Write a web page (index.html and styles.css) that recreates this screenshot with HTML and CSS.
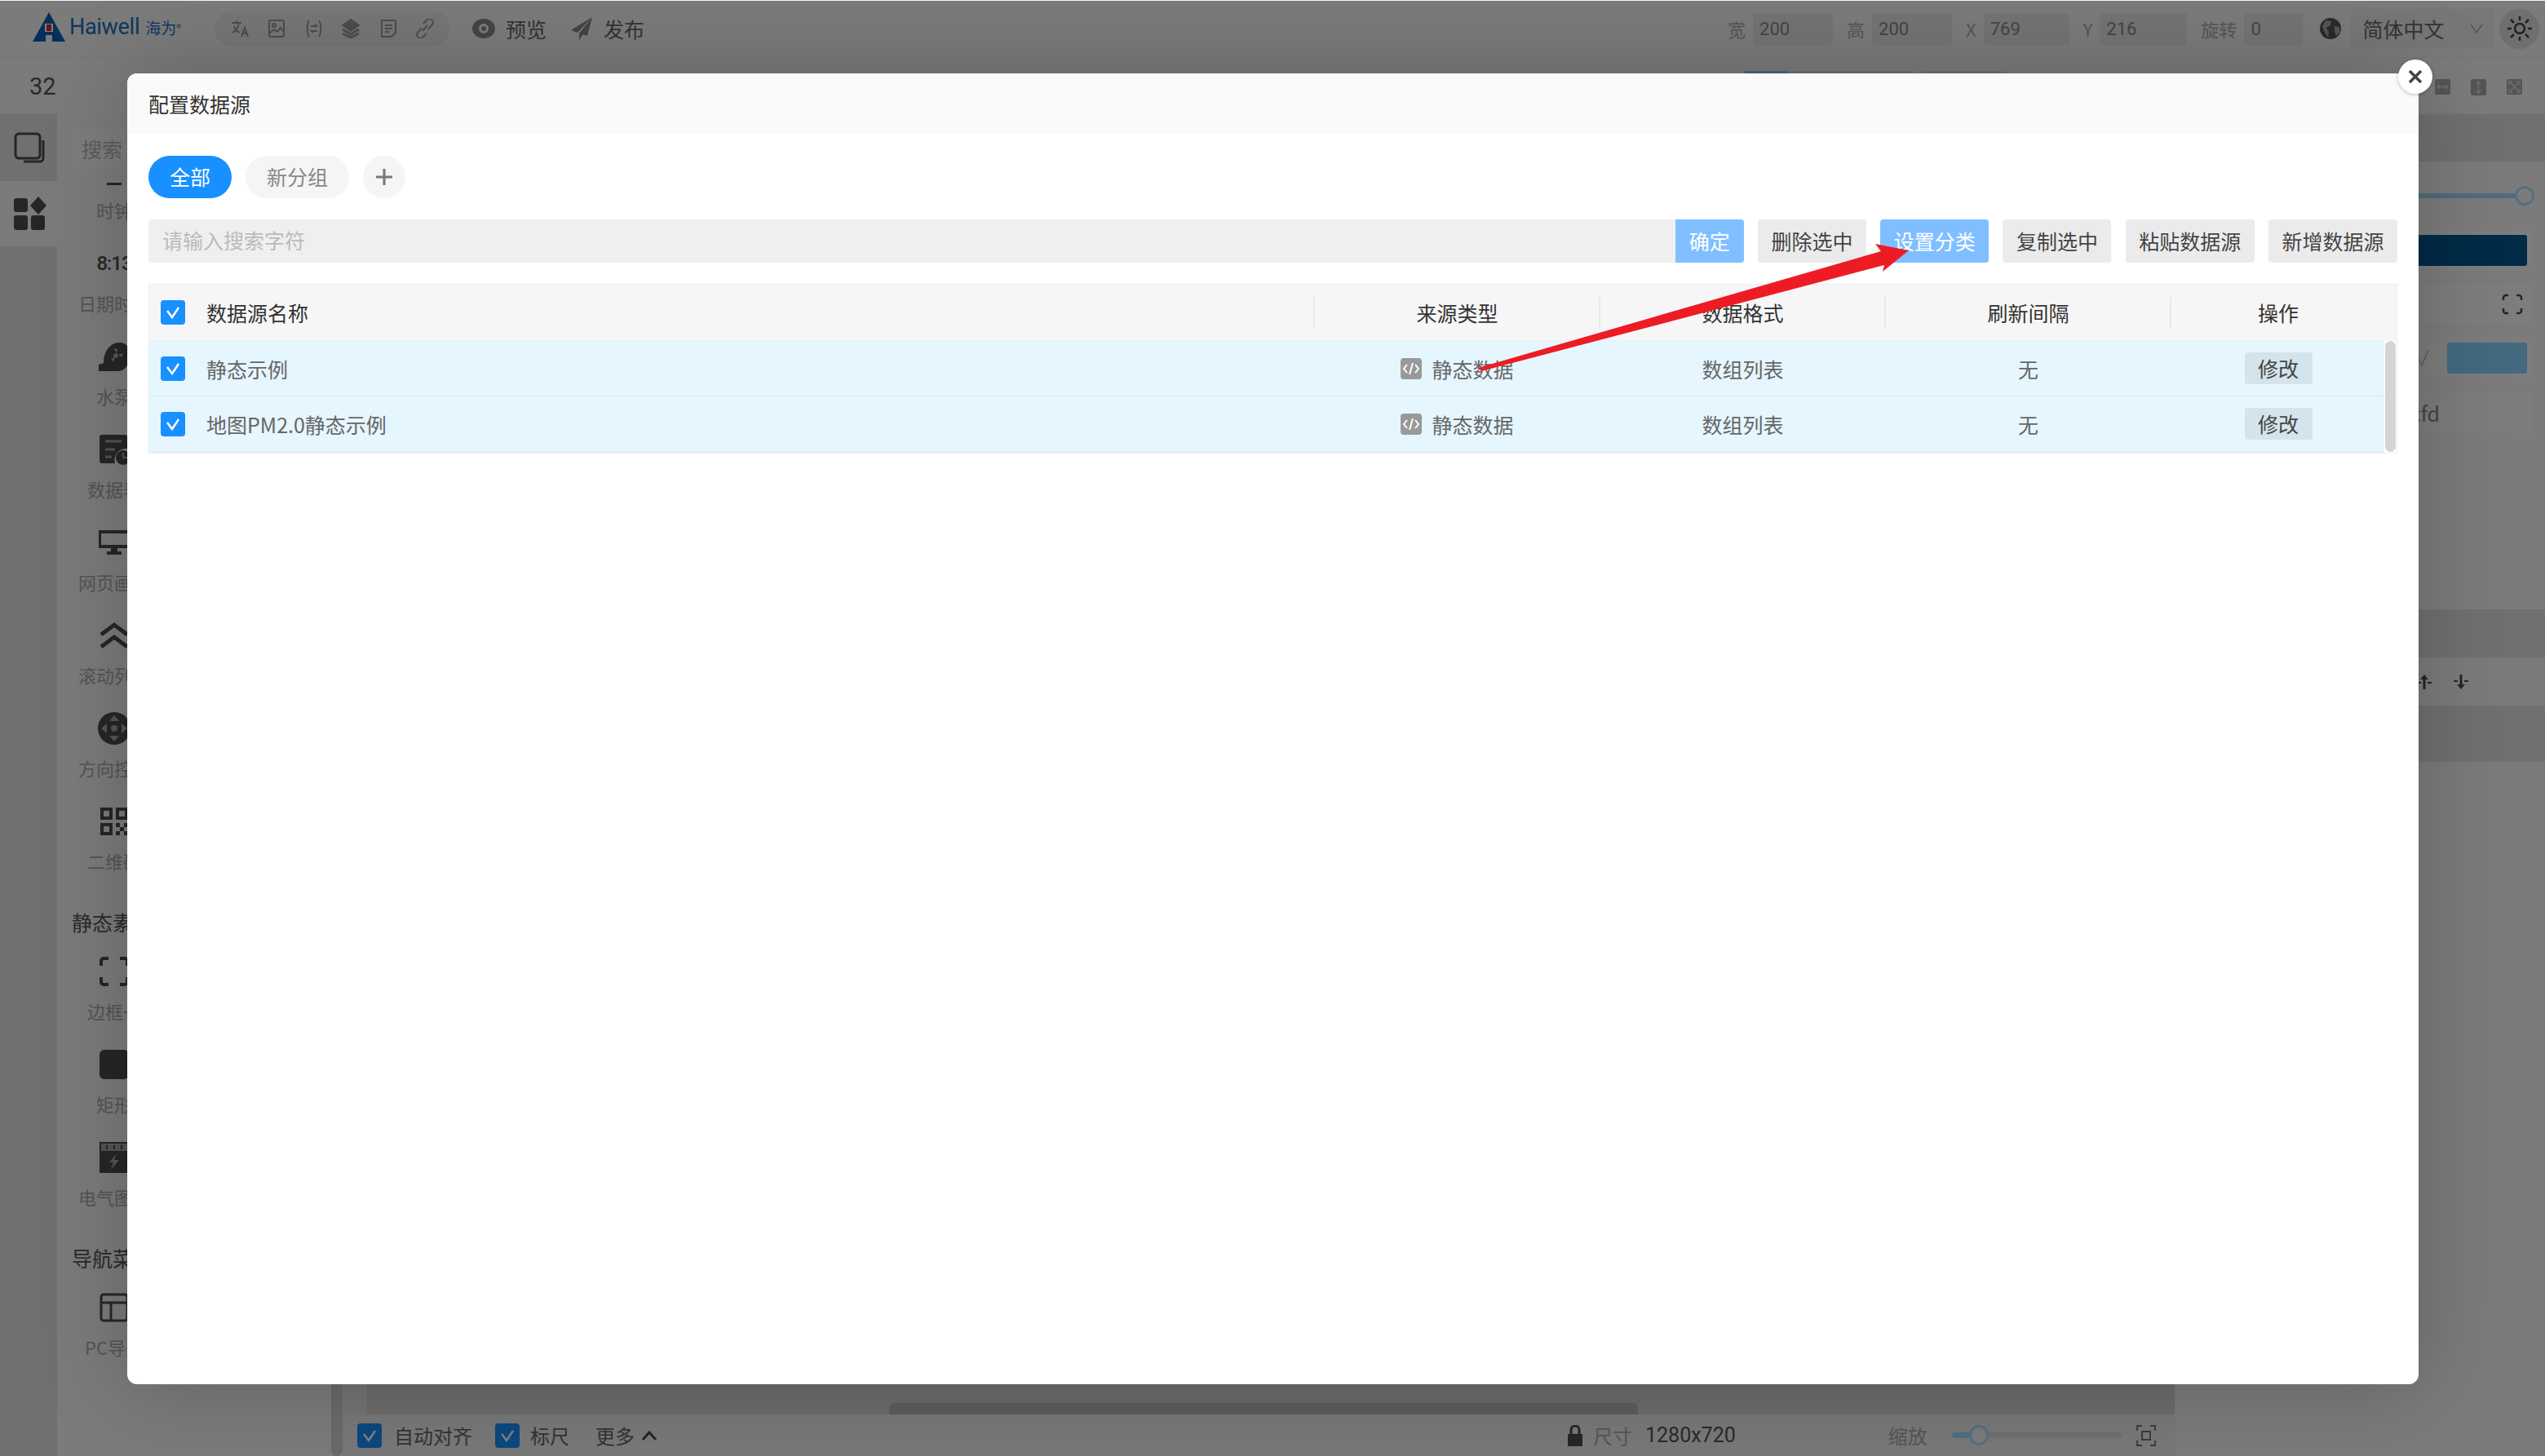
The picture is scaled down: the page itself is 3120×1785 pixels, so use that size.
FILE: index.html
```html
<!DOCTYPE html>
<html lang="zh-CN">
<head>
    <meta charset="UTF-8">
    <title>配置数据源</title>
    <link rel="stylesheet" href="styles.css">
</head>
<body>
    <div class="page">
        <!-- top toolbar -->
        <header class="topbar">
            <div class="logo">
                <svg width="40" height="36" viewBox="0 0 40 36"><path d="M20 0L40 36H24V28H16V36H0Z" fill="#0f5fb5"/><rect x="15" y="14" width="10" height="10" fill="#fff"/><rect x="17" y="15" width="6" height="8" fill="#c92a2a"/></svg>
                <span class="logo-en">Haiwell</span>
                <span class="logo-cn">海为</span>
                <sup class="logo-r">®</sup>
            </div>
            <div class="tool-group">
                <svg class="tool-icon" viewBox="0 0 24 24"><path d="M2 5h12M8 2v3M11 5c-1 6-4 10-8 12M5 9c1 4 4 7 7 8M14 22l4-11 4 11M15.500 18h5" /></svg>
                <svg class="tool-icon" viewBox="0 0 24 24"><rect x="3" y="2" width="18" height="20" rx="2"/><circle cx="9" cy="8" r="2"/><path d="M3 18l6-5 4 3 4-5 4 5"/></svg>
                <svg class="tool-icon" viewBox="0 0 24 24"><path d="M6 2C3 6 3 18 6 22M18 2c3 4 3 16 0 20M8 9h7l-2-2M16 15H9l2 2"/></svg>
                <svg class="tool-icon solid" viewBox="0 0 24 24"><path d="M12 1l10 7-10 7L2 8z"/><path class="line" d="M2 13l10 6 10-6M2 18l10 5 10-5"/></svg>
                <svg class="tool-icon" viewBox="0 0 24 24"><path d="M4 2h17v15l-5 5H4zM8 8h9M8 12h9M8 16h5"/></svg>
                <svg class="tool-icon" viewBox="0 0 24 24"><path d="M10 6l4-4a4 4 0 0 1 7 5l-5 6M14 18l-4 4a4 4 0 0 1-7-5l5-6M9 15l6-7"/></svg>
            </div>
            <div class="top-action">
                <svg width="28" height="24" viewBox="0 0 28 24"><ellipse cx="14" cy="12" rx="14" ry="12" fill="#888"/><circle cx="14" cy="12" r="6" fill="#f6f6f6"/><circle cx="14" cy="12" r="3" fill="#888"/></svg>
                <span>预览</span>
            </div>
            <div class="top-action">
                <svg width="28" height="30" viewBox="0 0 28 30"><path d="M27 1L1 17l8 3zM27 1L11 21v8l5-7 5 2z" fill="#888"/></svg>
                <span>发布</span>
            </div>
            <div class="prop-group">
                <label class="prop">宽<span class="prop-val w98">200</span></label>
                <label class="prop">高<span class="prop-val w98">200</span></label>
                <label class="prop">X<span class="prop-val w105">769</span></label>
                <label class="prop">Y<span class="prop-val w107">216</span></label>
                <label class="prop">旋转<span class="prop-val w72">0</span></label>
            </div>
            <svg class="globe" width="28" height="28" viewBox="0 0 28 28"><circle cx="14" cy="14" r="13" fill="#555"/><path d="M8 4l7 1-1 5-5 3 3 5-1 7-5-8-2-6zM19 11l6 1 1 6-5 5-2-5z" fill="#a8a8a8"/></svg>
            <div class="lang">简体中文<svg width="16" height="14" viewBox="0 0 16 14"><path d="M1 2l7 10 7-10" fill="none" stroke="#aaa" stroke-width="1.500"/></svg></div>
            <div class="theme">
                <svg width="32" height="32" viewBox="0 0 32 32" fill="none" stroke="#444" stroke-width="2.500"><circle cx="16" cy="16" r="6"/><path d="M16 1v5M16 26v5M1 16h5M26 16h5M5 5l4 4M23 23l4 4M27 5l-4 4M9 23l-4 4"/></svg>
            </div>
        </header>

        <div class="subbar">
            <span class="zoom-num">32</span>
            <div class="sub-tabs"><i class="sub-tab on"></i><i class="sub-tab wide"></i><i class="sub-tab last"></i></div>
            <div class="sub-icons">
                <svg width="19" height="19" viewBox="0 0 19 19"><rect width="19" height="19" rx="2" fill="#aaa"/><path d="M3 9.500h13M6 7L3 9.500 6 12M13 7l3 2.500-3 2.500" fill="none" stroke="#ddd" stroke-width="1.500"/></svg>
                <svg width="19" height="20" viewBox="0 0 19 20"><rect width="19" height="20" rx="2" fill="#aaa"/><path d="M9.500 3v14M7 6l2.500-3L12 6M7 14l2.500 3 2.500-3" fill="none" stroke="#ddd" stroke-width="1.500"/></svg>
                <svg width="19" height="19" viewBox="0 0 19 19"><rect width="19" height="19" rx="2" fill="#aaa"/><path d="M3 7V3h4M16 7V3h-4M3 12v4h4M16 12v4h-4M5 5l9 9M14 5l-9 9" fill="none" stroke="#ddd" stroke-width="1.500"/></svg>
            </div>
        </div>

        <div class="main">
            <!-- left rail -->
            <nav class="rail">
                <div class="rail-tab">
                    <svg width="40" height="38" viewBox="0 0 40 38" fill="none" stroke="#4c4c4c" stroke-width="3"><rect x="2" y="2" width="30" height="30" rx="4"/><path d="M36 10v22a4 4 0 0 1-4 4H12"/></svg>
                </div>
                <div class="rail-tab on">
                    <svg width="42" height="42" viewBox="0 0 42 42" fill="#4c4c4c"><rect x="1" y="2" width="17" height="17" rx="3"/><path d="M31 0l10 11-10 11-10-11z"/><rect x="1" y="23" width="17" height="18" rx="3"/><rect x="22" y="23" width="17" height="18" rx="3"/></svg>
                </div>
            </nav>

            <!-- component list -->
            <aside class="sidebar">
                <div class="side-search">搜索</div>
                <div class="side-list">
                    <div class="cell"><div class="cell-icon"><svg width="18" height="36" viewBox="0 0 18 36"><rect y="33" width="18" height="3" fill="#4c4c4c"/></svg></div><span>时钟</span></div>
                    <div class="cell"><div class="cell-icon"><span class="clock">8:13</span></div><span>日期时间</span></div>
                    <div class="cell">
                        <div class="cell-icon"><svg width="40" height="36" viewBox="0 0 40 36"><path d="M1 36v-8l6-2c0-14 8-25 19-25s13 8 13 17-6 18-14 18z" fill="#4c4c4c"/><circle cx="22" cy="17" r="3" fill="#aaa"/><path d="M19 8l5 1-1 5zM31 14l-2 5-4-3zM16 20l5-1-2 6z" fill="#aaa"/></svg></div>
                        <span>水泵</span>
                    </div>
                    <div class="cell">
                        <div class="cell-icon"><svg width="38" height="38" viewBox="0 0 38 38"><path d="M4 1h28a3 3 0 0 1 3 3v14h-3a14 14 0 0 0-12 18H4a3 3 0 0 1-3-3V4a3 3 0 0 1 3-3z" fill="#4c4c4c"/><path d="M8 9h20M8 19h12M8 28h8" stroke="#aaa" stroke-width="3"/><circle cx="30" cy="29" r="9" fill="#4c4c4c"/><path d="M30 23v6h6" stroke="#aaa" stroke-width="2" fill="none"/></svg></div>
                        <span>数据表</span>
                    </div>
                    <div class="cell">
                        <div class="cell-icon"><svg width="40" height="32" viewBox="0 0 40 32" fill="#4c4c4c"><path d="M1 1h38v22H1zM4 5v14h32V5z" fill-rule="evenodd"/><rect x="16" y="23" width="8" height="4"/><rect x="11" y="27" width="18" height="4"/></svg></div>
                        <span>网页画面</span>
                    </div>
                    <div class="cell">
                        <div class="cell-icon"><svg width="38" height="34" viewBox="0 0 38 34" fill="none" stroke="#4c4c4c" stroke-width="5"><path d="M3 16L19 4l16 12M3 31l16-12 16 12"/></svg></div>
                        <span>滚动列表</span>
                    </div>
                    <div class="cell">
                        <div class="cell-icon"><svg width="40" height="40" viewBox="0 0 40 40"><circle cx="20" cy="20" r="20" fill="#4c4c4c"/><path d="M20 4l6 7H14zM20 36l-6-7h12zM4 20l7-6v12zM36 20l-7 6V14z" fill="#aaa"/><circle cx="20" cy="20" r="4" fill="#aaa"/></svg></div>
                        <span>方向控制</span>
                    </div>
                    <div class="cell">
                        <div class="cell-icon"><svg width="34" height="34" viewBox="0 0 34 34" fill="#4c4c4c"><path fill-rule="evenodd" d="M0 0h15v15H0zM4 4v7h7V4zM19 0h15v15H19zM23 4v7h7V4zM0 19h15v15H0zM4 23v7h7v-7z"/><path d="M19 19h5v5h-5zM29 19h5v5h-5zM24 24h5v5h-5zM19 29h5v5h-5zM29 29h5v5h-5z"/></svg></div>
                        <span>二维码</span>
                    </div>
                    <h4 class="side-head">静态素材</h4>
                    <div class="cell">
                        <div class="cell-icon"><svg width="36" height="36" viewBox="0 0 36 36" fill="none" stroke="#4c4c4c" stroke-width="4"><path d="M11 2H5a3 3 0 0 0-3 3v6M25 2h6a3 3 0 0 1 3 3v6M11 34H5a3 3 0 0 1-3-3v-6M25 34h6a3 3 0 0 0 3-3v-6"/></svg></div>
                        <span>边框一</span>
                    </div>
                    <div class="cell">
                        <div class="cell-icon"><div class="rect-icon"></div></div>
                        <span>矩形</span>
                    </div>
                    <div class="cell">
                        <div class="cell-icon"><svg width="36" height="38" viewBox="0 0 36 38"><path fill="#4c4c4c" d="M0 0h36v38H0z"/><path fill="#aaa" d="M2 2h32v9H2z"/><path fill="#4c4c4c" d="M8 4h2v5H8zM17 4h2v5h-2zM26 4h2v5h-2z"/><path fill="#aaa" d="M21 14l-9 11h5l-3 9 10-12h-6z"/></svg></div>
                        <span>电气图标</span>
                    </div>
                    <h4 class="side-head">导航菜单</h4>
                    <div class="cell">
                        <div class="cell-icon"><svg width="36" height="36" viewBox="0 0 36 36" fill="none" stroke="#4c4c4c" stroke-width="3"><rect x="2" y="2" width="32" height="32" rx="3"/><path d="M2 12h32M14 12v22"/></svg></div>
                        <span>PC导航</span>
                    </div>
                </div>
            </aside>
            <div class="side-scroll"></div>

            <!-- canvas -->
            <section class="center">
                <div class="canvas-wrap">
                    <div class="ruler"></div>
                    <div class="canvas">
                        <div class="hscroll"></div>
                    </div>
                </div>
                <footer class="statusbar">
                    <span class="cb cb-blue"><svg width="18" height="16" viewBox="0 0 18 16"><path d="M2 6l6 8 8-12" fill="none" stroke="#fff" stroke-width="2.500"/></svg></span>
                    <span class="st-text">自动对齐</span>
                    <span class="cb cb-blue second"><svg width="18" height="16" viewBox="0 0 18 16"><path d="M2 6l6 8 8-12" fill="none" stroke="#fff" stroke-width="2.500"/></svg></span>
                    <span class="st-text">标尺</span>
                    <span class="st-text more">更多</span>
                    <svg class="caret" width="20" height="14" viewBox="0 0 20 14"><path d="M2 12l8-9 8 9" fill="none" stroke="#4c4c4c" stroke-width="3"/></svg>
                    <svg class="lock" width="20" height="26" viewBox="0 0 20 26" fill="#4c4c4c"><path d="M1 11h18v15H1z"/><path d="M5 11V6a5 5 0 0 1 10 0v5" fill="none" stroke="#4c4c4c" stroke-width="3"/></svg>
                    <span class="st-text dim size-label">尺寸</span>
                    <span class="st-text size-val">1280x720</span>
                    <span class="st-text dim zoom-label">缩放</span>
                    <div class="slider"><i class="slider-fill"></i><i class="slider-dot"></i></div>
                    <svg class="fit" width="24" height="28" viewBox="0 0 24 28" fill="none" stroke="#777" stroke-width="2"><path d="M7 2H1v6M17 2h6v6M7 26H1v-6M17 26h6v-6"/><rect x="7" y="9" width="10" height="10"/></svg>
                </footer>
            </section>

            <!-- right property panel -->
            <aside class="props">
                <div class="band h58"></div>
                <div class="p-row h84"><div class="p-slider"><i></i></div></div>
                <div class="p-box h49"><div class="p-btn"></div></div>
                <div class="p-box h48 m18">
                    <svg class="p-corners" width="26" height="26" viewBox="0 0 26 26" fill="none" stroke="#4c4c4c" stroke-width="2.500"><path d="M8 2H5a3 3 0 0 0-3 3v3M18 2h3a3 3 0 0 1 3 3v3M8 24H5a3 3 0 0 1-3-3v-3M18 24h3a3 3 0 0 0 3-3v-3"/></svg>
                </div>
                <div class="p-box h48 m18">
                    <svg class="p-check" width="14" height="22" viewBox="0 0 14 22"><path d="M1 12l4 8 8-19" fill="none" stroke="#bbb" stroke-width="1.500"/></svg>
                    <div class="p-swatch"></div>
                </div>
                <div class="p-box h48 m19"><span class="p-text">#cfd</span></div>
                <div class="band h59 m217"></div>
                <div class="p-row h59 arrows">
                    <svg width="18" height="20" viewBox="0 0 18 20" fill="#4c4c4c"><path d="M9 1l5 6h-3.500v12h-3V7H4zM0 10h5v2H0zM13 10h5v2h-5z"/></svg>
                    <svg width="18" height="20" viewBox="0 0 18 20" fill="#4c4c4c"><path d="M9 19l5-6h-3.500V1h-3v12H4zM0 8h5v2H0zM13 8h5v2h-5z"/></svg>
                </div>
                <div class="band h69"></div>
            </aside>
        </div>
    </div>

    <div class="overlay">
        <div class="modal">
            <div class="modal-head">配置数据源</div>
            <div class="modal-body">
                <div class="groups">
                    <span class="pill on">全部</span>
                    <span class="pill">新分组</span>
                    <span class="pill add"><svg width="22" height="22" viewBox="0 0 22 22"><path d="M11 1v20M1 11h20" stroke="#777" stroke-width="3"/></svg></span>
                </div>
                <div class="toolbar">
                    <div class="search">
                        <div class="search-input">请输入搜索字符</div>
                        <button class="btn btn-blue btn-ok">确定</button>
                    </div>
                    <button class="btn">删除选中</button>
                    <button class="btn btn-blue">设置分类</button>
                    <button class="btn">复制选中</button>
                    <button class="btn">粘贴数据源</button>
                    <button class="btn">新增数据源</button>
                </div>
                <div class="table">
                    <div class="thead">
                        <div class="col col-name"><span class="cb"><svg width="18" height="16" viewBox="0 0 18 16"><path d="M2 6l6 8 8-12" fill="none" stroke="#fff" stroke-width="2.500"/></svg></span>数据源名称</div>
                        <div class="col sep">来源类型</div>
                        <div class="col sep">数据格式</div>
                        <div class="col sep">刷新间隔</div>
                        <div class="col sep col-op">操作</div>
                    </div>
                    <div class="tbody">
                        <div class="rows">
                            <div class="row">
                                <div class="col col-name"><span class="cb"><svg width="18" height="16" viewBox="0 0 18 16"><path d="M2 6l6 8 8-12" fill="none" stroke="#fff" stroke-width="2.500"/></svg></span>静态示例</div>
                                <div class="col"><svg class="code-icon" width="26" height="26" viewBox="0 0 26 26"><rect width="26" height="26" rx="4" fill="#999"/><path d="M8 8l-4 5 4 5M18 8l4 5-4 5M15 6l-4 14" fill="none" stroke="#fff" stroke-width="2"/></svg>静态数据</div>
                                <div class="col">数组列表</div>
                                <div class="col">无</div>
                                <div class="col col-op"><button class="edit">修改</button></div>
                            </div>
                            <div class="row last">
                                <div class="col col-name"><span class="cb"><svg width="18" height="16" viewBox="0 0 18 16"><path d="M2 6l6 8 8-12" fill="none" stroke="#fff" stroke-width="2.500"/></svg></span>地图PM2.0静态示例</div>
                                <div class="col"><svg class="code-icon" width="26" height="26" viewBox="0 0 26 26"><rect width="26" height="26" rx="4" fill="#999"/><path d="M8 8l-4 5 4 5M18 8l4 5-4 5M15 6l-4 14" fill="none" stroke="#fff" stroke-width="2"/></svg>静态数据</div>
                                <div class="col">数组列表</div>
                                <div class="col">无</div>
                                <div class="col col-op"><button class="edit">修改</button></div>
                            </div>
                        </div>
                        <div class="scrollbar"><i></i></div>
                    </div>
                </div>
            </div>
            <button class="close"><svg width="20" height="20" viewBox="0 0 20 20"><path d="M3 3l14 14M17 3L3 17" stroke="#444" stroke-width="3.500"/></svg></button>
        </div>
    </div>

    <!-- red annotation arrow -->
    <svg class="annot" width="3120" height="1785" viewBox="0 0 3120 1785"><polygon points="1812,451 2306,308 2299,299 2340,307 2308,333 2310,325 1816,455" fill="#ed1c24"/></svg>
</body>
</html>
```

FILE: styles.css
```css
* {
    box-sizing: border-box;
}
body {
    margin: 0;
    width: 3120px;
    height: 1785px;
    overflow: hidden;
    position: relative;
    font-family: "Noto Sans CJK SC", "Noto Sans", sans-serif;
    font-size: 25px;
    font-weight: 400;
    color: #333;
    background-color: #f6f6f6;
}
.page {
    width: 3120px;
    height: 1785px;
    display: flex;
    flex-direction: column;
}

/* top toolbar */
.topbar {
    height: 71px;
    flex: none;
    display: flex;
    align-items: center;
    border-bottom: 1px solid #e8e8e8;
    padding-left: 40px;
}
.logo {
    width: 223px;
    display: flex;
    align-items: center;
    margin-top: -4px;
}
.logo-en {
    font-family: "Roboto", sans-serif;
    font-size: 27px;
    color: #1c6fc0;
    margin-left: 5px;
    letter-spacing: -0.3px;
}
.logo-cn {
    font-size: 19px;
    color: #1c6fc0;
    margin-left: 7px;
}
.logo-r {
    font-size: 12px;
    color: #1c6fc0;
}
.tool-group {
    width: 289px;
    height: 44px;
    background-color: #ededed;
    border-radius: 22px;
    display: flex;
    align-items: center;
    justify-content: space-between;
    padding: 0 19px;
}
.tool-icon {
    width: 24px;
    height: 24px;
    fill: none;
    stroke: #999;
    stroke-width: 2;
}
.tool-icon.solid {
    fill: #999;
}
.tool-icon.solid .line {
    fill: none;
    stroke-width: 3;
}
.top-action {
    display: flex;
    align-items: center;
    gap: 13px;
    margin-left: 27px;
    color: #666;
}
.top-action + .top-action {
    margin-left: 29px;
}
.prop-group {
    display: flex;
    align-items: center;
    margin-left: 1328px;
}
.prop {
    display: flex;
    align-items: center;
    gap: 9px;
    margin-right: 17px;
    color: #aaa;
    font-size: 22px;
}
.prop-val {
    height: 39px;
    line-height: 39px;
    padding-left: 8px;
    background-color: #e9e9e9;
    border-radius: 3px;
    color: #888;
    font-family: "Roboto", sans-serif;
    font-size: 22px;
}
.w98 { width: 98px; }
.w105 { width: 105px; }
.w107 { width: 107px; }
.w72 { width: 72px; }
.globe {
    margin-left: 3px;
}
.lang {
    width: 175px;
    height: 49px;
    margin-left: 11px;
    padding: 0 13px 0 14px;
    background-color: #eeeeee;
    border-radius: 4px;
    display: flex;
    align-items: center;
    justify-content: space-between;
    color: #666;
}
.theme {
    width: 49px;
    height: 49px;
    margin-left: 7px;
    border-radius: 50%;
    background-color: #dedede;
    display: flex;
    align-items: center;
    justify-content: center;
}

/* second row */
.subbar {
    height: 69px;
    flex: none;
    display: flex;
    padding-left: 36px;
}
.zoom-num {
    width: 32px;
    font-size: 29px;
    font-family: "Roboto", sans-serif;
    color: #555;
    margin-top: 18px;
}
.sub-tabs {
    display: flex;
    gap: 10px;
    margin: 16px 0 0 2071px;
    align-items: flex-start;
}
.sub-tab {
    display: block;
    height: 20px;
    background-color: #e6e6e6;
    width: 100px;
}
.sub-tab.on {
    width: 53px;
    margin-right: -10px;
    background-color: #9ecbee;
}
.sub-tab.wide {
    width: 153px;
}
.sub-icons {
    display: flex;
    gap: 25px;
    margin: 26px 0 0 530px;
    align-items: flex-start;
}

.main {
    flex: 1;
    display: flex;
    min-height: 0;
}

/* left rail */
.rail {
    width: 70px;
    flex: none;
    background-color: #e0e0e0;
}
.rail-tab {
    height: 82px;
    padding-left: 3px;
    display: flex;
    align-items: center;
    justify-content: center;
}
.rail-tab.on {
    height: 80px;
    background-color: #f6f6f6;
}

/* component list */
.sidebar {
    width: 336px;
    flex: none;
    position: relative;
    overflow: hidden;
}
.side-search {
    position: absolute;
    left: 18px;
    top: 19px;
    width: 300px;
    height: 50px;
    line-height: 46px;
    padding-left: 12px;
    background-color: #fbfbfb;
    color: #bbb;
}
.side-list {
    padding-top: 28px;
}
.cell {
    height: 114px;
    padding-top: 23px;
    display: flex;
    flex-direction: column;
    align-items: center;
    width: 140px;
    font-size: 22px;
    line-height: 30px;
    color: #aaa;
}
.cell-icon {
    height: 36px;
    margin-bottom: 15px;
    display: flex;
    align-items: center;
    justify-content: center;
    flex: none;
    white-space: nowrap;
}
.clock {
    color: #4c4c4c;
    font-size: 24px;
    font-weight: 500;
    letter-spacing: -1px;
    font-family: "Roboto", sans-serif;
}
.rect-icon {
    width: 36px;
    height: 36px;
    border-radius: 6px;
    background-color: #4c4c4c;
}
.side-head {
    margin: 0;
    height: 70px;
    padding: 33px 0 0 18px;
    font-size: 25px;
    line-height: 34px;
    font-weight: 400;
    color: #555;
}
.side-scroll {
    width: 14px;
    flex: none;
    margin-left: 0;
    background-color: #d4d4d4;
    border-radius: 0 0 7px 7px;
}

/* canvas */
.center {
    width: 2246px;
    flex: none;
    display: flex;
    flex-direction: column;
}
.canvas-wrap {
    flex: 1;
    display: flex;
    min-height: 0;
}
.ruler {
    width: 30px;
    flex: none;
    background-color: #e8e8e8;
}
.canvas {
    flex: 1;
    background-color: #d8d8d8;
    display: flex;
    align-items: flex-end;
    padding-left: 640px;
}
.hscroll {
    width: 918px;
    height: 14px;
    border-radius: 7px 7px 0 0;
    background-color: #bbbbbb;
}
.statusbar {
    height: 51px;
    flex: none;
    display: flex;
    align-items: center;
    padding-left: 18px;
    font-size: 24px;
    background-color: #f0f0f0;
}
.st-text {
    color: #666;
}
.st-text.dim {
    color: #aaa;
}
.cb {
    width: 30px;
    height: 30px;
    flex: none;
    border-radius: 4px;
    background-color: #1890ff;
    display: inline-flex;
    align-items: center;
    justify-content: center;
}
.statusbar .cb {
    margin-right: 15px;
}
.statusbar .cb.second {
    margin-left: 28px;
    margin-right: 13px;
}
.more {
    margin-left: 32px;
}
.caret {
    margin-left: 8px;
}
.lock {
    margin-left: 1115px;
}
.size-label {
    margin-left: 12px;
}
.size-val {
    margin-left: 16px;
    font-family: "Roboto", sans-serif;
    font-size: 25px;
    color: #555;
}
.zoom-label {
    margin-left: 187px;
}
.slider {
    width: 208px;
    height: 7px;
    margin-left: 30px;
    border-radius: 4px;
    background-color: #dcdcdc;
    position: relative;
}
.slider-fill {
    display: block;
    width: 32px;
    height: 7px;
    border-radius: 4px;
    background-color: #9ae0ff;
}
.slider-dot {
    position: absolute;
    left: 21px;
    top: -9px;
    width: 24px;
    height: 25px;
    border-radius: 50%;
    background-color: #f6f6f6;
    border: 3px solid #a8e0ff;
}
.fit {
    margin-left: 18px;
}

/* right property panel */
.props {
    flex: 1;
    padding-bottom: 0;
    background-color: #f6f6f6;
}
.band {
    background-color: #e0e0e0;
}
.h58 { height: 58px; }
.h59 { height: 59px; }
.h69 { height: 69px; }
.h84 { height: 84px; }
.h48 { height: 48px; }
.h49 { height: 49px; }
.m18 { margin-top: 18px; }
.m19 { margin-top: 19px; }
.m217 { margin-top: 217px; }
.p-row {
    display: flex;
    align-items: center;
}
.p-slider {
    width: 429px;
    height: 6px;
    background-color: #a0d8fa;
    position: relative;
}
.p-slider i {
    position: absolute;
    right: -12px;
    top: -9px;
    width: 24px;
    height: 24px;
    border-radius: 50%;
    border: 3px solid #a8e0ff;
    background-color: #f6f6f6;
}
.p-box {
    width: 438px;
    background-color: #fbfbfb;
    display: flex;
    align-items: center;
    justify-content: flex-end;
    padding-right: 6px;
    border-radius: 3px;
}
.p-btn {
    width: 432px;
    height: 38px;
    border-radius: 3px;
    background-color: #02568e;
}
.p-corners {
    margin-right: 5px;
}
.p-check {
    margin-right: 22px;
}
.p-swatch {
    width: 98px;
    height: 38px;
    border-radius: 3px;
    background-color: #86d4ff;
}
.p-text {
    width: 100%;
    padding-left: 275px;
    color: #888;
}
.arrows {
    padding-left: 297px;
    gap: 27px;
}

/* dialog */
.overlay {
    position: absolute;
    left: 0;
    top: 1px;
    right: 0;
    bottom: 0;
    background-color: rgba(0, 0, 0, 0.5);
}
.modal {
    position: absolute;
    left: 156px;
    top: 89px;
    width: 2809px;
    height: 1607px;
    display: flex;
    flex-direction: column;
    background-color: #fff;
    border-radius: 12px;
    box-shadow: 0 0 110px rgba(0, 0, 0, 0.22);
}
.modal-head {
    height: 74px;
    flex: none;
    padding-left: 26px;
    line-height: 74px;
    background-color: #fafafa;
    border-radius: 12px 12px 0 0;
    color: #333;
}
.modal-body {
    padding: 27px 26px 0;
}
.groups {
    display: flex;
    gap: 17px;
    height: 52px;
}
.pill {
    height: 52px;
    padding: 0 26px;
    line-height: 50px;
    border-radius: 26px;
    background-color: #f5f5f5;
    color: #888;
}
.pill.on {
    background-color: #1890ff;
    color: #fff;
}
.pill.add {
    width: 52px;
    padding: 0;
    display: flex;
    align-items: center;
    justify-content: center;
}
.toolbar {
    display: flex;
    gap: 17.250px;
    margin-top: 26px;
    height: 53px;
}
.search {
    flex: 1;
    display: flex;
    min-width: 0;
}
.search-input {
    flex: 1;
    padding-left: 17px;
    line-height: 51px;
    background-color: #efefef;
    border-radius: 4px 0 0 4px;
    color: #bbb;
}
.btn {
    height: 53px;
    padding: 0 16.500px;
    border: none;
    border-radius: 4px;
    background-color: #ebebeb;
    color: #444;
    font: inherit;
    line-height: 51px;
    white-space: nowrap;
}
.btn-blue {
    background-color: #80bfff;
    color: #fff;
}
.btn-ok {
    width: 84px;
    padding: 0;
    border-radius: 0 4px 4px 0;
}

/* table */
.table {
    margin-top: 26px;
    border: 1px solid #eeeeee;
    width: 2757px;
}
.thead {
    display: grid;
    grid-template-columns: 1427px 350px 350px 350px 263px;
    height: 69px;
    background-color: #f6f6f6;
    color: #333;
}
.thead .col {
    border-bottom: 1px solid #eeeeee;
}
.tbody {
    display: flex;
}
.rows {
    width: 2740px;
    flex: none;
}
.row {
    display: grid;
    grid-template-columns: 1427px 350px 350px 350px 263px;
    height: 68px;
    background-color: #e5f6ff;
    border-bottom: 1px solid #dcebf3;
    color: #666;
}
.row.last {
    height: 69px;
    border-bottom: 2px solid #e3eff5;
}
.col {
    position: relative;
    display: flex;
    align-items: center;
    justify-content: center;
    padding-left: 3px;
}
.col-name {
    justify-content: flex-start;
    padding-left: 14px;
}
.col-name .cb {
    margin-right: 26px;
}
.col.sep::before {
    content: "";
    position: absolute;
    left: 0;
    top: 15px;
    height: 39px;
    width: 2px;
    background-color: #e8e8e8;
}
.code-icon {
    margin-right: 12px;
}
.edit {
    width: 83px;
    height: 39px;
    padding: 0;
    border: none;
    border-radius: 4px;
    background-color: #d3e4ec;
    color: #444;
    font: inherit;
    line-height: 37px;
}
.scrollbar {
    flex: 1;
    padding: 0 1px 0 1px;
}
.scrollbar i {
    display: block;
    height: 136px;
    border-radius: 7px;
    background-color: #d4d4d4;
}
.close {
    position: absolute;
    right: -17px;
    top: -17px;
    width: 42px;
    height: 42px;
    padding: 0;
    border: none;
    border-radius: 50%;
    background-color: #fff;
    box-shadow: 0 1px 4px rgba(0, 0, 0, 0.25);
    display: flex;
    align-items: center;
    justify-content: center;
}
.annot {
    position: absolute;
    left: 0;
    top: 0;
    pointer-events: none;
}
```
